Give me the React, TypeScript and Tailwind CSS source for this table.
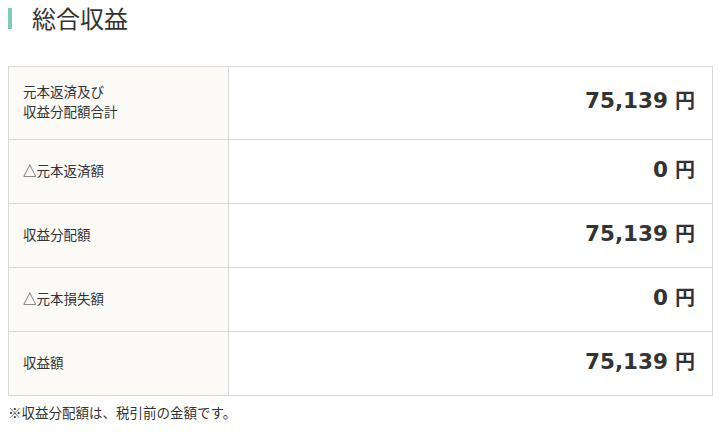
const rows = [
  { label: ["元本返済及び", "収益分配額合計"], value: "75,139", h: "h-[73px]" },
  { label: ["△元本返済額"], value: "0", h: "h-[64px]" },
  { label: ["収益分配額"], value: "75,139", h: "h-[64px]" },
  { label: ["△元本損失額"], value: "0", h: "h-[64px]" },
  { label: ["収益額"], value: "75,139", h: "h-[64px]" },
];

const jp = "font-['Noto_Sans_CJK_JP',sans-serif]";

export default function App() {
  return (
    <div className={`w-[723px] h-[436px] bg-white text-[#333] ${jp}`}>
      <div className="pt-[7px] pl-2 flex items-center">
        <span className="w-1 h-[21px] bg-[#7ccfae]" />
        <h2 className="ml-5 text-[24px] leading-[22px] text-[#333]">総合収益</h2>
      </div>
      <table className="mt-[37px] ml-2 w-[705px] border-collapse">
        <tbody>
          {rows.map((r, i) => (
            <tr key={i} className={r.h}>
              <td className="w-[220px] border border-[#d8d8d8] bg-[#fbfaf6] pl-[14px] pb-[4px] text-[13.5px] leading-[20px] align-middle">
                {r.label.map((l) => (
                  <div key={l}>{l}</div>
                ))}
              </td>
              <td className="border border-[#d8d8d8] pr-[17px] pb-[3px] text-right align-middle">
                <span className="font-['DejaVu_Sans',sans-serif] font-bold text-[21.5px] text-[#333]">
                  {r.value}
                </span>
                <span className="font-bold text-[20px] ml-[7px]">円</span>
              </td>
            </tr>
          ))}
        </tbody>
      </table>
      <p className="mt-[6px] ml-2 text-[13.5px] leading-[20px]">※収益分配額は、税引前の金額です。</p>
    </div>
  );
}
